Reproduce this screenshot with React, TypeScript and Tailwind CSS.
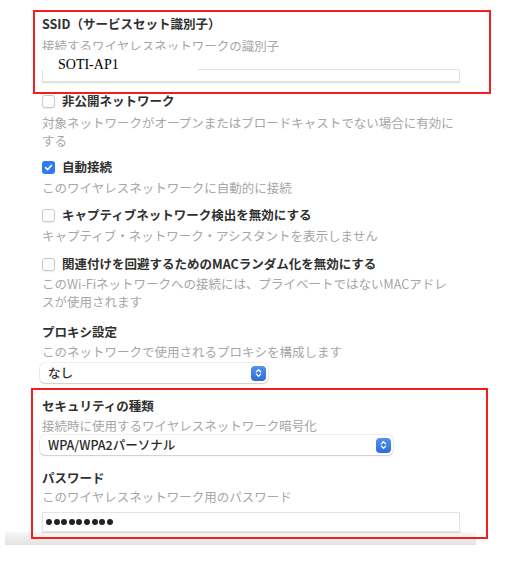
import React from "react";

const font = '"Noto Sans CJK JP", "Noto Sans", sans-serif';

const Title = ({ children, className = "" }: { children: React.ReactNode; className?: string }) => (
  <div className={`text-[12.5px] font-bold leading-[18px] text-[#303030] ${className}`}>{children}</div>
);

const Desc = ({ children, className = "" }: { children: React.ReactNode; className?: string }) => (
  <div className={`w-[414px] text-[12.5px] leading-[18px] text-[#a6a6a6] ${className}`}>{children}</div>
);

const Checkbox = ({ checked }: { checked?: boolean }) =>
  checked ? (
    <span className="flex h-[13px] w-[13px] items-center justify-center rounded-[3px] bg-[#2f7bf5]">
      <svg width="9" height="9" viewBox="0 0 10 10">
        <path d="M1.8 5.2 L4 7.5 L8.3 2.6" fill="none" stroke="white" strokeWidth="1.8" strokeLinecap="round" strokeLinejoin="round" />
      </svg>
    </span>
  ) : (
    <span className="h-[13px] w-[13px] rounded-[3px] border border-[#cacaca] bg-white shadow-[0_0.5px_1px_rgba(0,0,0,0.08)]" />
  );

const CheckRow = ({ checked, label, className = "" }: { checked?: boolean; label: string; className?: string }) => (
  <div className={`flex h-[18px] items-center gap-[7px] ${className}`}>
    <Checkbox checked={checked} />
    <Title>{label}</Title>
  </div>
);

// up/down stepper of the mac popup button
const Stepper = () => (
  <span className="flex h-[15px] w-[15px] items-center justify-center rounded-[4px] bg-gradient-to-b from-[#5392ee] to-[#2d6cd9]">
    <svg width="7" height="10" viewBox="0 0 7 10">
      <path d="M1.3 3.9 L3.5 1.7 L5.7 3.9 M1.3 6.1 L3.5 8.3 L5.7 6.1" fill="none" stroke="white" strokeWidth="1.3" strokeLinecap="round" strokeLinejoin="round" />
    </svg>
  </span>
);

const Select = ({ value, className = "" }: { value: string; className?: string }) => (
  <div className={`flex h-[20px] items-center justify-between rounded-[5px] bg-white pl-[8px] pr-[2px] shadow-[0_0_0_0.5px_rgba(0,0,0,0.12),0_1px_1.5px_rgba(0,0,0,0.15)] ${className}`}>
    <span className="text-[12.5px] font-medium leading-[18px] text-[#2b2b2b]">{value}</span>
    <Stepper />
  </div>
);

const App = () => {
  return (
    <div className="relative h-[566px] w-[511px] overflow-hidden bg-white" style={{ fontFamily: font }}>
      {/* window bottom edge */}
      <div className="absolute left-[5px] top-[532px] h-[13px] w-[471px] bg-gradient-to-b from-[#f7f7f7] to-[#e3e3e3]" />

      <div className="relative pt-[10px]">
        {/* SSID */}
        <div className="relative ml-[33px] h-[84px] w-[458px] border-2 border-[#f21d1d] pl-[7px] pt-[3px]">
          <Title>SSID（サービスセット識別子）</Title>
          <Desc className="mt-[4px]">接続するワイヤレスネットワークの識別子</Desc>
          <div className="mt-[14px] h-[13px] w-[418px] border border-[#e2e2e2] bg-white shadow-[0_1px_1px_rgba(0,0,0,0.12)]" />
          <div className="absolute left-[5px] top-[38px] h-[20px] w-[158px] bg-white pl-[18px]">
            <span className="text-[14px] leading-[19px] text-black" style={{ fontFamily: '"Liberation Serif", serif' }}>
              SOTI-AP1
            </span>
          </div>
        </div>

        <div className="pl-[42px]">
          <CheckRow label="非公開ネットワーク" className="-mt-[2px]" />
          <Desc className="mt-[4px]">対象ネットワークがオープンまたはブロードキャストでない場合に有効にする</Desc>

          <CheckRow checked label="自動接続" className="mt-[8px]" />
          <Desc className="mt-[3px]">このワイヤレスネットワークに自動的に接続</Desc>

          <CheckRow label="キャプティブネットワーク検出を無効にする" className="mt-[9px]" />
          <Desc className="mt-[3px]">キャプティブ・ネットワーク・アシスタントを表示しません</Desc>

          <CheckRow label="関連付けを回避するためのMACランダム化を無効にする" className="mt-[10px]" />
          <Desc className="mt-[2px]">このWi-Fiネットワークへの接続には、プライベートではないMACアドレスが使用されます</Desc>

          {/* Proxy */}
          <Title className="mt-[12px]">プロキシ設定</Title>
          <Desc className="mt-[2px]">このネットワークで使用されるプロキシを構成します</Desc>
          <Select value="なし" className="-ml-[2px] mt-[2px] w-[228px]" />

          {/* Security */}
          <div className="-ml-[11px] mt-[5px] h-[151px] w-[457px] border-2 border-[#f21d1d] pl-[9px] pt-[7px]">
            <Title>セキュリティの種類</Title>
            <Desc className="mt-[2px]">接続時に使用するワイヤレスネットワーク暗号化</Desc>
            <Select value="WPA/WPA2パーソナル" className="-ml-[2px] w-[353px]" />

            <Title className="mt-[14px]">パスワード</Title>
            <Desc className="mt-[1px]">このワイヤレスネットワーク用のパスワード</Desc>
            <div className="mt-[6px] flex h-[20px] w-[418px] items-center gap-[1.6px] border border-[#e4e4e4] bg-white pl-[3px] shadow-[0_1px_1px_rgba(0,0,0,0.12)]">
              {Array.from({ length: 9 }).map((_, i) => (
                <span key={i} className="h-[6px] w-[6px] rounded-full bg-[#222]" />
              ))}
            </div>
          </div>
        </div>
      </div>
    </div>
  );
};

export default App;
